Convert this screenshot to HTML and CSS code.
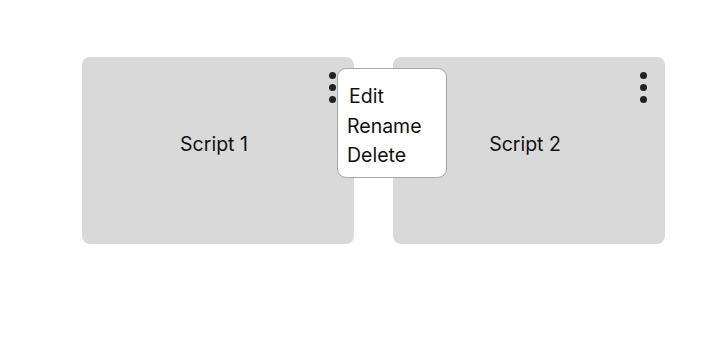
FILE: index.html
```html
<!DOCTYPE html>
<html lang="en">
<head>
<meta charset="utf-8">
<title>Scripts</title>
<link rel="stylesheet" href="styles.css">
</head>
<body>
<div class="grid">
  <div class="card">
    <button class="kebab" aria-label="More"><span></span><span></span><span></span></button>
    <div class="title">Script 1</div>
    <ul class="menu">
      <li class="item first">Edit</li>
      <li class="item">Rename</li>
      <li class="item">Delete</li>
    </ul>
  </div>
  <div class="card">
    <button class="kebab" aria-label="More"><span></span><span></span><span></span></button>
    <div class="title">Script 2</div>
  </div>
</div>
</body>
</html>
```

FILE: styles.css
```css
html, body {
  margin: 0;
  padding: 0;
  background: #ffffff;
  font-family: Inter, "Liberation Sans", sans-serif;
  color: #111111;
}

.grid {
  display: flex;
  gap: 39px;
  padding: 57px 0 0 82px;
}

.card {
  position: relative;
  width: 272px;
  height: 187px;
  box-sizing: border-box;
  padding: 0 8px 13px 0;
  background: #d9d9d9;
  border-radius: 8px;
  display: flex;
  align-items: center;
  justify-content: center;
}

.title {
  font-size: 19.5px;
  line-height: 22px;
}

.kebab {
  position: absolute;
  top: 15px;
  right: 18px;
  display: flex;
  flex-direction: column;
  gap: 5px;
  padding: 0;
  border: 0;
  background: transparent;
}

.kebab span {
  display: block;
  width: 7px;
  height: 7px;
  border-radius: 50%;
  background: #222222;
}

.menu {
  position: absolute;
  left: 255px;
  top: 11px;
  z-index: 2;
  width: 110px;
  height: 110px;
  box-sizing: border-box;
  margin: 0;
  padding: 13px 0 0 9px;
  list-style: none;
  background: #ffffff;
  border: 1px solid #a8a8a8;
  border-radius: 9px;
}

.item {
  font-size: 19.5px;
  line-height: 29.5px;
}

.item.first {
  padding-left: 2px;
}
```
